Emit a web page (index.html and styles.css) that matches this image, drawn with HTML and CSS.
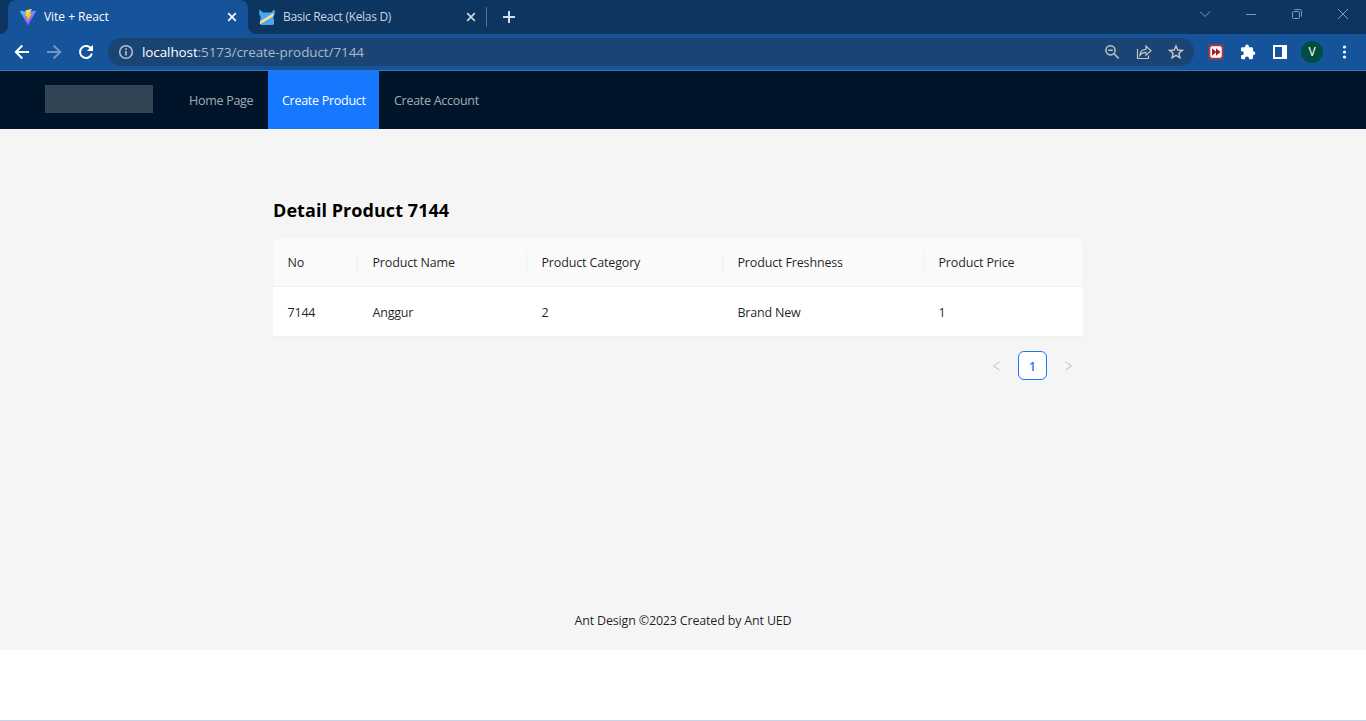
FILE: index.html
```html
<!DOCTYPE html>
<html lang="en">
<head>
<meta charset="utf-8">
<title>Vite + React</title>
<link rel="stylesheet" href="styles.css">
</head>
<body>
<div class="browser">
  <div class="tabstrip">
    <div class="tab tab-active">
      <svg class="favicon" width="16" height="16" viewBox="0 0 16 16">
        <defs>
          <linearGradient id="vite" x1="0" y1="0" x2="0.7" y2="1"><stop offset="0" stop-color="#41d1ff"/><stop offset="1" stop-color="#bd34fe"/></linearGradient>
          <linearGradient id="bolt" x1="0" y1="0" x2="0" y2="1"><stop offset="0" stop-color="#ffea83"/><stop offset="0.2" stop-color="#ffdd35"/><stop offset="1" stop-color="#ffa800"/></linearGradient>
        </defs>
        <path fill="url(#vite)" d="M15.9 2.4 8.4 15.7a.5.5 0 0 1-.8 0L.1 2.4c-.2-.3.1-.7.5-.6L8 3.1l7.400-1.300c.4-.1.700.3.5.6z"/>
        <path fill="url(#bolt)" d="M11.500.100 5.900 1.200c-.1 0-.2.1-.2.200L5.400 7.200c0 .2.100.3.300.200l1.500-.3-.5 2.300 1.300-.2-.8 3.500c0 .3.200.4.4.100l3.700-7.200c.1-.2 0-.3-.2-.3l-1.600.3L11.700.3c0-.1-.1-.2-.2-.2z"/>
      </svg>
      <span class="tab-title title-vite">Vite + React</span>
      <svg class="tab-close" width="10" height="10" viewBox="0 0 10 10"><path d="M1.200 1.200 8.800 8.800M8.800 1.200 1.200 8.800"/></svg>
    </div>
    <div class="tab">
      <svg class="favicon" width="16" height="16" viewBox="0 0 16 16">
        <path fill="#4aa8ee" d="M.5.2 4 3.500h8L15.500.2 16 4l-1.800 4L15 11v4.500L12 16H2.500L.5 15l1.300-6.500L.2 5z"/>
        <path fill="#ffe08a" d="M1.200 12.300 14.500 4v3.200L1 15.300z"/>
      </svg>
      <span class="tab-title title-basic">Basic React (Kelas D)</span>
      <svg class="tab-close" width="10" height="10" viewBox="0 0 10 10"><path d="M1.200 1.200 8.800 8.800M8.800 1.200 1.200 8.800"/></svg>
    </div>
    <span class="tab-divider"></span>
    <svg class="new-tab" width="12" height="12" viewBox="0 0 12 12"><path d="M6 0v12M0 6h12"/></svg>
    <div class="window-controls">
      <svg width="12" height="12" viewBox="0 0 12 12"><path d="M1 3.500 6 8.500 11 3.500"/></svg>
      <svg width="12" height="12" viewBox="0 0 12 12"><path d="M1 6.500h10"/></svg>
      <svg width="12" height="12" viewBox="0 0 12 12"><rect x="1.500" y="3.500" width="7" height="7" rx="1.200"/><path d="M3.500 1.500h5a2 2 0 0 1 2 2v5"/></svg>
      <svg width="12" height="12" viewBox="0 0 12 12"><path d="M1 1 11 11M11 1 1 11"/></svg>
    </div>
  </div>

  <div class="toolbar">
    <div class="nav-buttons">
      <svg width="16" height="16" viewBox="0 0 16 16"><path d="M15 8H2M8.300 1.500 1.800 8l6.500 6.500"/></svg>
      <svg class="disabled" width="16" height="16" viewBox="0 0 16 16"><path d="M1 8h13M7.700 1.500 14.200 8l-6.500 6.500"/></svg>
      <svg width="16" height="16" viewBox="0 0 16 16"><path d="M13.300 5A6 6 0 1 0 13.900 9.400"/><path class="solid" d="M15 .8V7H8.800z"/></svg>
    </div>
    <div class="omnibox">
      <svg class="info" width="16" height="16" viewBox="0 0 16 16"><circle cx="8" cy="8" r="6.300"/><path d="M8 7v4.500M8 4.200v1.700"/></svg>
      <span class="url"><span class="host">localhost</span><span class="path">:5173/create-product/7144</span></span>
      <div class="omni-actions">
        <svg width="16" height="16" viewBox="0 0 16 16"><circle cx="6.500" cy="6.300" r="4.600"/><path d="M10 9.800 14.600 14.400M4.300 6.300h4.500"/></svg>
        <svg class="share" width="16" height="16" viewBox="0 0 16 16"><path d="M1.500 5v9.500h11V11.500M3.800 11.300C4 7.500 6.500 5.300 10 5.300V2.200L15 6.700l-5 4.400V8.300C7.300 8.100 5.300 9 3.800 11.300z"/></svg>
        <svg width="16" height="16" viewBox="0 0 16 16"><path d="M8 2 9.800 6l4.500.4-3.400 2.900 1 4.300L8 11.300l-3.900 2.300 1-4.300L1.700 6.400 6.200 6z"/></svg>
      </div>
    </div>
    <div class="extensions">
      <svg width="16" height="16" viewBox="0 0 16 16"><rect x=".5" y=".5" width="15" height="15" rx="3.500" fill="#c23232"/><rect x="2.300" y="2.300" width="11.400" height="11.400" rx="2" fill="#fff"/><path fill="#a81818" d="M4 4.200 8.300 8 4 11.800zM8 4.200 12.500 8 8 11.800z"/></svg>
      <svg width="16" height="16" viewBox="0 0 16 16"><path fill="#fff" d="M13.800 7.300H13V4.600c0-.8-.6-1.400-1.400-1.400H8.900V2.400a1.900 1.900 0 0 0-3.800 0v.8H2.400C1.600 3.200 1 3.800 1 4.600v2.600h.8a2 2 0 0 1 0 4H1v2.600c0 .8.6 1.400 1.400 1.400H5v-.8a2 2 0 0 1 4 0v.8h2.600c.8 0 1.400-.6 1.400-1.400V11h.8a1.900 1.900 0 0 0 0-3.700z"/></svg>
      <svg width="16" height="16" viewBox="0 0 16 16"><path fill="#fff" fill-rule="evenodd" d="M1 1h14v14H1zM3 3v10h7V3z"/></svg>
      <span class="avatar">V</span>
      <svg width="16" height="16" viewBox="0 0 16 16" fill="#fff"><circle cx="8.500" cy="3" r="1.600"/><circle cx="8.500" cy="8" r="1.600"/><circle cx="8.500" cy="13" r="1.600"/></svg>
    </div>
  </div>
</div>

<header class="site-header">
  <div class="logo"></div>
  <nav class="menu">
    <a class="menu-item item-home">Home Page</a>
    <a class="menu-item item-product selected">Create Product</a>
    <a class="menu-item item-account">Create Account</a>
  </nav>
</header>

<main class="content">
  <section class="detail">
    <h1 class="heading"><span>Detail Product 7144</span></h1>
    <table class="product-table">
      <colgroup><col class="c-no"><col class="c-name"><col class="c-cat"><col class="c-fresh"><col class="c-price"></colgroup>
      <thead>
        <tr><th>No</th><th>Product Name</th><th>Product Category</th><th>Product Freshness</th><th>Product Price</th></tr>
      </thead>
      <tbody>
        <tr><td>7144</td><td>Anggur</td><td>2</td><td>Brand New</td><td>1</td></tr>
      </tbody>
    </table>
    <div class="pagination">
      <svg class="arrow" width="9" height="10" viewBox="0 0 9 10"><path d="M7.500 1 1.500 5l6 4"/></svg>
      <span class="page">1</span>
      <svg class="arrow" width="9" height="10" viewBox="0 0 9 10"><path d="M1.500 1 7.500 5l-6 4"/></svg>
    </div>
  </section>
  <footer class="footer">Ant Design ©2023 Created by Ant UED</footer>
</main>
<div class="window-edge"></div>
</body>
</html>
```

FILE: styles.css
```css
* { box-sizing: border-box; }

body {
  margin: 0;
  height: 721px;
  overflow: hidden;
  display: flex;
  flex-direction: column;
  background: #fff;
  color: rgba(0, 0, 0, 0.88);
  font-family: "Open Sans", "Noto Sans", sans-serif;
  font-size: 12px;
}

svg { display: block; flex: none; }

/* Browser frame */
.browser {
  flex: none;
  height: 71px;
  background: #15539a;
  border-bottom: 1px solid #3f74b0;
}

.tabstrip {
  height: 34px;
  display: flex;
  background: #0c3560;
}

.tab {
  position: relative;
  width: 239px;
  display: flex;
  align-items: center;
  padding: 0 11px 0 11px;
  color: #ccd6e0;
}

.tab-active {
  width: 240px;
  margin-left: 8px;
  padding: 0 11px 0 12px;
  border-radius: 8px 8px 0 0;
  background: #15539a;
  color: #fff;
}

.tab-active::before,
.tab-active::after {
  content: "";
  position: absolute;
  bottom: 0;
  width: 8px;
  height: 8px;
}

.tab-active::before {
  left: -8px;
  background: radial-gradient(circle at 0 0, #0c3560 7.5px, #15539a 8.5px);
}

.tab-active::after {
  right: -8px;
  background: radial-gradient(circle at 100% 0, #0c3560 7.5px, #15539a 8.5px);
}

.tab-title {
  flex: 1;
  margin-left: 8px;
  font-size: 12px;
  line-height: 34px;
  white-space: nowrap;
}

.title-vite { letter-spacing: -0.03px; }
.title-basic { letter-spacing: -0.3px; }

.tab-close {
  fill: none;
  stroke: currentColor;
  stroke-width: 1.7;
}

.tab-divider {
  align-self: center;
  width: 1px;
  height: 20px;
  margin-left: -1px;
  background: #52708f;
}

.new-tab {
  align-self: center;
  margin-left: 16px;
  fill: none;
  stroke: #d5dfea;
  stroke-width: 2;
}

.window-controls {
  display: flex;
  gap: 34px;
  margin: 8px 17px 0 auto;
  fill: none;
  stroke: #8497ac;
  stroke-width: 1;
}

.toolbar {
  height: 36px;
  display: flex;
  align-items: center;
}

.nav-buttons {
  display: flex;
  gap: 16px;
  width: 94px;
  margin-left: 14px;
  fill: none;
  stroke: #fff;
  stroke-width: 2;
}

.nav-buttons .disabled { stroke: #7296c2; }
.nav-buttons .solid { fill: #fff; stroke: none; }

.omnibox {
  display: flex;
  align-items: center;
  width: 1086px;
  height: 28px;
  padding: 0 10px;
  border-radius: 14px;
  background: #1a4473;
}

.info {
  fill: none;
  stroke: #b3c0cf;
  stroke-width: 1.600;
}

.url {
  margin-left: 8px;
  font-size: 13.5px;
  line-height: 28px;
  white-space: nowrap;
}

.host { color: #fff; letter-spacing: -0.1px; }
.path { color: #aab9ca; letter-spacing: -0.1px; }

.omni-actions {
  display: flex;
  gap: 16px;
  margin-left: auto;
  fill: none;
  stroke: #c3c5c8;
  stroke-width: 1.500;
}

.share { stroke-width: 1.200; }

.extensions {
  display: flex;
  align-items: center;
  gap: 16px;
  margin-left: 14px;
}

.avatar {
  width: 22px;
  height: 22px;
  margin: 0 -3px;
  border-radius: 50%;
  background: #004d40;
  color: #fff;
  font: 12px/22px Roboto, sans-serif;
  text-align: center;
}

/* Application header */
.site-header {
  flex: none;
  height: 58px;
  display: flex;
  padding-left: 45px;
  background: #001529;
}

.logo {
  width: 108px;
  height: 28px;
  margin: 14px 22px 0 0;
  background: #334454;
}

.menu { display: flex; }

.menu-item {
  padding-left: 14px;
  color: rgba(255, 255, 255, 0.65);
  font-size: 12.500px;
  line-height: 59px;
  white-space: nowrap;
  letter-spacing: -0.28px;
}

.item-home { width: 93px; }
.item-product { width: 111px; }
.item-account { width: 114px; padding-left: 15px; }

.selected {
  background: #1677ff;
  color: #fff;
}

/* Page content */
.content {
  flex: none;
  height: 521px;
  display: flex;
  flex-direction: column;
  background: #f5f5f5;
}

.detail {
  width: 810px;
  margin: 68px 0 0 273px;
}

.heading {
  margin: 0 0 14px;
  color: #000;
  font-size: 18px;
  font-weight: 700;
  line-height: 27px;
  letter-spacing: 0.06px;
}

.product-table {
  width: 810px;
  table-layout: fixed;
  border-collapse: separate;
  border-spacing: 0;
}

.c-no { width: 85px; }
.c-name { width: 169px; }
.c-cat { width: 196px; }
.c-fresh { width: 201px; }
.c-price { width: 159px; }

.product-table th,
.product-table td {
  padding: 0 0 0 14.500px;
  border-bottom: 1px solid #f0f0f0;
  font-size: 12.500px;
  text-align: left;
  white-space: nowrap;
  letter-spacing: -0.2px;
}

.product-table th {
  position: relative;
  height: 49px;
  background: #fafafa;
  font-weight: 500;
  letter-spacing: -0.15px;
}

.product-table th:first-child { border-top-left-radius: 7px; }
.product-table th:last-child { border-top-right-radius: 7px; }

.product-table th:not(:last-child)::after {
  content: "";
  position: absolute;
  top: 14px;
  right: 0;
  width: 1px;
  height: 20px;
  background: #f0f0f0;
}

.product-table td {
  height: 50px;
  padding-top: 2px;
  background: #fff;
}

.pagination {
  display: flex;
  align-items: center;
  justify-content: flex-end;
  gap: 17px;
  margin-top: 14px;
  padding-right: 10px;
}

.page {
  width: 29px;
  height: 29px;
  border: 1px solid #1677ff;
  border-radius: 6px;
  background: #fff;
  color: #1677ff;
  font-weight: 600;
  line-height: 29px;
  text-align: center;
}

.arrow {
  fill: none;
  stroke: #bdbdbd;
  stroke-width: 1;
}

.footer {
  margin: auto 0 20px;
  line-height: 18px;
  font-size: 12.500px;
  text-align: center;
  letter-spacing: -0.18px;
}

.window-edge {
  margin-top: auto;
  height: 1px;
  background: #c5d3e6;
}
```
